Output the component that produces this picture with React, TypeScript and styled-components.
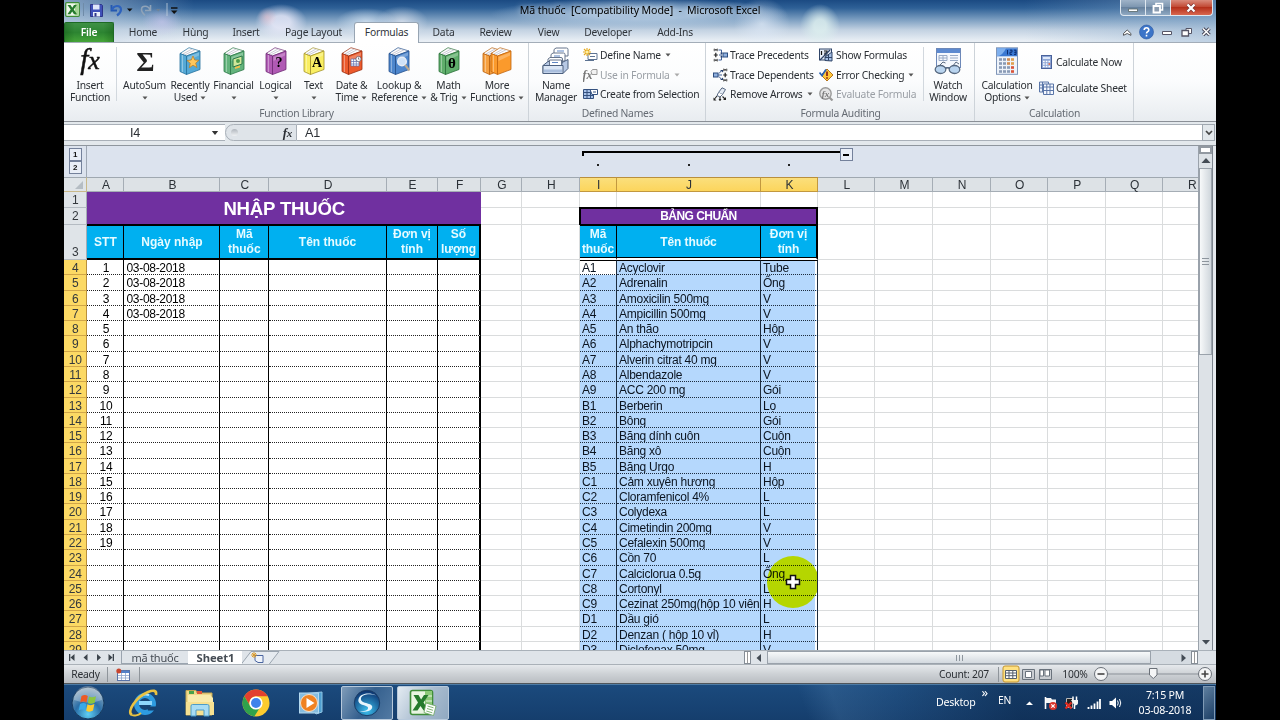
import { Fragment, ReactNode } from 'react';
import styled, { createGlobalStyle, css } from 'styled-components';

const COLUMNS = [
  { name: 'A', width: 37.1 },
  { name: 'B', width: 96 },
  { name: 'C', width: 48.5 },
  { name: 'D', width: 118 },
  { name: 'E', width: 51 },
  { name: 'F', width: 43 },
  { name: 'G', width: 41.5 },
  { name: 'H', width: 57.5 },
  { name: 'I', width: 37 },
  { name: 'J', width: 144 },
  { name: 'K', width: 57 },
  { name: 'L', width: 57.5 },
  { name: 'M', width: 57.6 },
  { name: 'N', width: 57.6 },
  { name: 'O', width: 57.6 },
  { name: 'P', width: 57.6 },
  { name: 'Q', width: 57.6 },
  { name: 'R', width: 57.6 },
];

const MEDICINES = [
  ['A1', 'Acyclovir', 'Tube'],
  ['A2', 'Adrenalin', 'Ống'],
  ['A3', 'Amoxicilin 500mg', 'V'],
  ['A4', 'Ampicillin 500mg', 'V'],
  ['A5', 'An thão', 'Hộp'],
  ['A6', 'Alphachymotripcin', 'V'],
  ['A7', 'Alverin citrat 40 mg', 'V'],
  ['A8', 'Albendazole', 'V'],
  ['A9', 'ACC 200 mg', 'Gói'],
  ['B1', 'Berberin', 'Lọ'],
  ['B2', 'Bông', 'Gói'],
  ['B3', 'Băng dính cuôn', 'Cuộn'],
  ['B4', 'Băng xô', 'Cuộn'],
  ['B5', 'Băng Urgo', 'H'],
  ['C1', 'Cảm xuyên hương', 'Hộp'],
  ['C2', 'Cloramfenicol 4%', 'L'],
  ['C3', 'Colydexa', 'L'],
  ['C4', 'Cimetindin 200mg', 'V'],
  ['C5', 'Cefalexin 500mg', 'V'],
  ['C6', 'Cồn 70', 'L'],
  ['C7', 'Calciclorua 0.5g', 'Ống'],
  ['C8', 'Cortonyl', 'L'],
  ['C9', 'Cezinat 250mg(hộp 10 viên', 'H'],
  ['D1', 'Dầu gió', 'L'],
  ['D2', 'Denzan ( hộp 10 vỉ)', 'H'],
  ['D3', 'Diclofenax 50mg', 'V'],
];

const TABS = [
  { name: 'Home', width: 58 },
  { name: 'Hùng', width: 47 },
  { name: 'Insert', width: 54 },
  { name: 'Page Layout', width: 81 },
  { name: 'Formulas', width: 65, active: true },
  { name: 'Data', width: 49 },
  { name: 'Review', width: 55 },
  { name: 'View', width: 51 },
  { name: 'Developer', width: 68 },
  { name: 'Add-Ins', width: 66 },
];

/* icons */

const Caret = ({ color = '#555' }: { color?: string }) => (
  <svg width='6' height='4' viewBox='0 0 6 4'>
    <path d='M0.5 0.5h5L3 3.5z' fill={color} />
  </svg>
);

interface BookProps {
  color: string;
  dark: string;
  children?: ReactNode;
}

const BookShape = ({ color, dark }: BookProps) => (
  <>
    <path d='M1 6.5L10 .7l11 3.3L7.5 9z' fill='#fdfdfd' stroke={dark} strokeWidth='.7' />
    <path d='M4 7l9-5M6 7.8l10-5' stroke='#aab' strokeWidth='.6' />
    <path d='M1 6.5L7.5 9v18.5L1 24.5z' fill={color} stroke={dark} strokeWidth='.8' />
    <path d='M3.4 8v17' stroke='#fff' strokeOpacity='.4' strokeWidth='1' />
    <path d='M7.5 9L21 4v18.5L7.5 27.5z' fill={color} stroke={dark} strokeWidth='.8' />
    <path d='M8.5 10L20 5.6v3L8.5 14z' fill='#fff' fillOpacity='.25' />
  </>
);

const Book = ({ color, dark, children }: BookProps) => (
  <svg width='22' height='28' viewBox='0 0 22 28'>
    <BookShape color={color} dark={dark} />
    {children}
  </svg>
);

const Glyph = styled.text`
  font-family: 'Liberation Serif', serif;
  font-weight: bold;
  font-size: 14px;
  letter-spacing: 0;
  text-anchor: middle;
`;

const MoreBooks = () => (
  <svg width='30' height='28' viewBox='0 0 30 28'>
    <BookShape color='#f6a040' dark='#b9600c' />
    <g transform='translate(8 0)'>
      <BookShape color='#fb9a2c' dark='#c0650f' />
    </g>
  </svg>
);

const NameManagerIcon = () => (
  <svg width='28' height='28' viewBox='0 0 28 28'>
    <g fill='#fff' stroke='#66758c' strokeWidth='1'>
      <path d='M12 2.5l2-1.5h10.5q1.5 0 1.5 1.5V9H12z' />
      <path d='M9 7.5L11 6h10.5q1.5 0 1.5 1.5V14H9z' />
      <path d='M6 12l2-1.5h11q1.5 0 1.5 1.5V18H6z' />
    </g>
    <path d='M15 4h7M12 9h6M9 13.5h6' stroke='#5f86c4' strokeWidth='1.2' />
    <path d='M1 18.5l5-4h2v3h12v-2l6-3v9l-5 5H1z' fill='#b8c9e4' stroke='#4c607f' />
    <path d='M7.5 13h12v5.5h-12z' fill='#fff' stroke='#66758c' />
    <path d='M10 15.5h6' stroke='#5f86c4' />
    <path d='M1 18.5h20v8H1z' fill='#dbe6f5' stroke='#4c607f' />
    <path d='M2 24h18' stroke='#a9bedd' strokeWidth='3' />
  </svg>
);

const WatchIcon = () => (
  <svg width='28' height='28' viewBox='0 0 28 28'>
    <rect x='2.5' y='1.5' width='24' height='19' fill='#f5f8fd' stroke='#6d88b8' />
    <rect x='3' y='2' width='23' height='4' fill='#5d8ad0' />
    <path d='M5 8.5h8v5H5zM5 11h8M16 8.5h8M16 11h8M16 13.5h8M9 8.5v5' stroke='#98aac6' fill='none' />
    <path d='M4 20l5-5 2.5 1M18 20l4-5 3 2' fill='none' stroke='#5b6b80' />
    <ellipse cx='6.5' cy='22.5' rx='5.3' ry='4' fill='#b9d4ef' stroke='#56687f' strokeWidth='1.3' />
    <ellipse cx='20.5' cy='22.5' rx='5.3' ry='4' fill='#b9d4ef' stroke='#56687f' strokeWidth='1.3' />
    <path d='M11.5 21.5q2-1.5 4 0' fill='none' stroke='#56687f' strokeWidth='1.3' />
  </svg>
);

const CalcIcon = () => (
  <svg width='24' height='28' viewBox='0 0 24 28'>
    <rect x='1.5' y='.8' width='21' height='26.5' fill='#eef3fa' stroke='#7f95b8' />
    <rect x='2' y='1.3' width='20' height='8' fill='#3a78d2' />
    <path d='M2 9.3q6-1 9-8H2z' fill='#7fb0ee' />
    <path d='M12.5 3v4.5M15 3.2h2v2h-2v2.2h2M19 3.2h2v4.2h-2M19.2 5.3h2' stroke='#0c2d70' fill='none' />
    {[12, 16, 20, 24].map((y) =>
      [4, 8, 12, 16].map((x) => (
        <rect
          key={`${x}-${y}`}
          x={x}
          y={y - 0.8}
          width='3'
          height='2.6'
          fill={x === 16 && y > 18 ? '#d9543a' : x === 16 ? '#e0a050' : y < 18 && x === 12 ? '#d08d55' : '#8a9bb6'}
        />
      ))
    )}
  </svg>
);

const SmallIcon = ({ name }: { name: string }) => (
  <svg width='15' height='14' viewBox='0 0 15 14'>
    {name === 'define' && (
      <>
        <path d='M5 5.5h9v6H5z' fill='#fff' stroke='#5d7392' />
        <path d='M7 8.5h5M2 12.5h9' stroke='#5d7392' />
        <path d='M4 0v8M0 4h8M1 1l6 6M7 1L1 7' stroke='#e6a91c' strokeWidth='1.1' />
        <circle cx='4' cy='4' r='1.5' fill='#fff0a0' />
      </>
    )}
    {name === 'use' && (
      <>
        <Glyph x='4.5' y='11' fill='#777' fontStyle='italic' style={{ fontSize: 12 }}>
          fx
        </Glyph>
        <path d='M8 3.5l1.5-2h4.5v5H9z' fill='#f2f2f2' stroke='#999' />
      </>
    )}
    {name === 'create' && (
      <>
        <path d='M.5 2.5h10v9H.5z' fill='#a9c3ea' stroke='#34517f' />
        <path d='M.5 5.5h10M.5 8.5h10M4 2v9.5M7.5 2v9.5' stroke='#34517f' />
        <path d='M7 2.5h7.5v5H9z' fill='#fff' stroke='#34517f' />
        <path d='M10 5h3' stroke='#34517f' />
      </>
    )}
    {name === 'precedents' && (
      <>
        <path d='M.8 1.8h4M.8 12.2h4M.8 7h4M2.8 4.8v4.4' stroke='#222' strokeWidth='1.2' />
        <path d='M1.3 .5v2.8M4.3 .5v2.8M1.3 10.8v2.8M4.3 10.8v2.8' stroke='#777' />
        <path d='M5.5 2h3v3.5M5.5 12h3V8.5M6 7h3' fill='none' stroke='#3f5f96' />
        <path d='M7 4.8h3L8.5 6.5zM7 9.2h3L8.5 7.5z' fill='#26406f' />
        <rect x='10' y='5' width='4.5' height='4' fill='#8fb0de' stroke='#2d4d80' />
      </>
    )}
    {name === 'dependents' && (
      <>
        <path d='M10.2 1.8h4M10.2 12.2h4M10.2 7h4M12.2 4.8v4.4' stroke='#222' strokeWidth='1.2' />
        <path d='M10.7 .5v2.8M13.7 .5v2.8M10.7 10.8v2.8M13.7 10.8v2.8' stroke='#777' />
        <path d='M6 5.5l3-3.5M6 8.5L9 12M5 7h4' fill='none' stroke='#3f5f96' />
        <path d='M7 2h3v2.5zM7 12h3V9.5z' fill='#26406f' />
        <rect x='.5' y='5' width='4.5' height='4' fill='#8fb0de' stroke='#2d4d80' />
      </>
    )}
    {name === 'remove' && (
      <>
        <path d='M5.5 5.5L9 .8l3.5 1.7-3 5z' fill='#e4ebf5' stroke='#566781' />
        <path d='M5.5 5.5l-1.5 3 3 1.5 2.5-2.5' fill='#fff' stroke='#566781' />
        <path d='M4 9l-2.5 3M7 10v3.5M9.5 9.5l2.5 2.5' stroke='#222' strokeWidth='1.1' />
        <path d='M.5 10.5v3h3zM5.5 12h3l-1.5 2zM13 10v3h-3z' fill='#222' />
      </>
    )}
    {name === 'show' && (
      <>
        <rect x='.5' y='1' width='12' height='11' fill='#e8eef8' stroke='#2f4468' />
        <path d='M2.5 3v4M5 3h3v2H6v2h2.5' stroke='#111' strokeWidth='1.2' fill='none' />
        <path d='M1 12L11 2' stroke='#2f4468' strokeWidth='1.3' />
        <path d='M6 12.5V9l7-5v9z' fill='#a5bfe5' stroke='#2f4468' />
        <path d='M9.5 6.5v6M6 9.5h7' stroke='#2f4468' />
      </>
    )}
    {name === 'error' && (
      <>
        <path d='M8 1l6 6-6 6-6-6z' fill='#ffc73a' stroke='#b5741a' />
        <path d='M8 3.5v4.5M8 9.2v1.6' stroke='#8a1f10' strokeWidth='1.7' />
        <path d='M.5 4.5L3 7.5 7 1.5' fill='none' stroke='#2b62b4' strokeWidth='1.7' />
      </>
    )}
    {name === 'evaluate' && (
      <>
        <circle cx='6.5' cy='6.5' r='5.7' fill='#e4e4e4' stroke='#999' strokeWidth='1.4' />
        <path d='M10.5 10.5l3 3' stroke='#999' strokeWidth='2.2' />
        <Glyph x='6.5' y='9.5' fill='#777' fontStyle='italic' style={{ fontSize: 9 }}>
          fx
        </Glyph>
      </>
    )}
    {name === 'calcNow' && (
      <>
        <rect x='2.5' y='.5' width='10' height='13' fill='#8ea6d6' stroke='#4a629b' />
        <rect x='4' y='2' width='7' height='2' fill='#dfe9fa' />
        <path d='M4 6.5h7M4 9h7M4 11.5h7' stroke='#fff' strokeWidth='1.6' strokeDasharray='1.7 1' />
        <path d='M9.5 9h1.7' stroke='#d2543a' strokeWidth='1.6' />
      </>
    )}
    {name === 'calcSheet' && (
      <>
        <path d='M.5 1h9v10h-9z' fill='#e9effa' stroke='#5a76a8' />
        <path d='M.5 4h9M.5 7h9M3.5 1v10' stroke='#5a76a8' />
        <path d='M4.5 3h10v10.5h-10z' fill='#f6f9ff' stroke='#5a76a8' />
        <path d='M4.5 6h10M4.5 9.5h10M7.8 3v10.5M11 3v10.5' stroke='#5a76a8' />
      </>
    )}
  </svg>
);

const ExcelLogo = ({ size }: { size: number }) => (
  <svg width={size} height={size} viewBox='0 0 28 28'>
    <rect x='1.5' y='1.5' width='22' height='24' rx='2' fill='#e9f5e2' stroke='#3f8d3a' strokeWidth='1.6' />
    <path d='M16 2h7v23h-7z' fill='#8cc978' />
    <path d='M17 7h6M17 12h6' stroke='#e9f5e2' />
    <path d='M4.5 6h5l2.6 4.6L15 6h4.5l-5 7.5 5.2 8h-5L11.5 17l-3 4.5h-5l5.5-8z' fill='#257a2d' />
    <path d='M17 14l10 3-2.5 9.5-9.5-3z' fill='#fff' stroke='#6aa45e' strokeWidth='.8' />
    <path d='M18.5 17l6 1.8M18 19.5l6 1.8M17.3 22l6 1.8' stroke='#7fb474' />
  </svg>
);

const SmallExcelLogo = () => (
  <svg width='15' height='15' viewBox='0 0 15 15'>
    <rect x='.7' y='.7' width='13.6' height='13.6' rx='1' fill='#eef7ea' stroke='#3f8d3a' strokeWidth='1.3' />
    <path d='M10 1.5h3.5v12H10z' fill='#a5d494' />
    <path d='M2.5 3h3l1.8 2.8L9 3h2.8L8.7 7.5l3.3 4.7H9L7.2 9.4l-1.9 2.8H2.4l3.3-4.7z' fill='#257a2d' />
  </svg>
);

const QuickIcons = () => (
  <svg width='100' height='16' viewBox='16 0 100 16'>
    <path d='M19.5 2v13' stroke='#6f8ba8' />
    <g transform='translate(26 3)'>
      <path d='M.5 .5h11l1 1v11H.5z' fill='#3f50b8' stroke='#2d368a' />
      <path d='M3 .5h6.5v5H3z' fill='#dfe6fa' />
      <path d='M3 8h7v4.5H3z' fill='#e9eef9' />
      <path d='M4.5 9h2v3.5h-2z' fill='#2d368a' />
    </g>
    <path d='M47.5 4v5.5h5.5' fill='none' stroke='#2458b0' strokeWidth='1.9' />
    <path d='M48 9c1.5-5 9-5.5 9-.5 0 3-2 4.5-4 6' fill='none' stroke='#2d62bd' strokeWidth='2.2' />
    <path d='M63 7.5h5.5L65.7 10.5z' fill='#111' />
    <path d='M86.5 4v5.5H81M86 9c-1.5-5-8.5-5-8.5-.5 0 2.5 1.5 4 3.5 6' fill='none' stroke='#8fa3b8' strokeWidth='1.6' />
    <path d='M92 8h4.5L94.2 10.5z' fill='#6f8296' />
    <path d='M103 2v13' stroke='#c3d0dd' strokeWidth='.8' />
    <path d='M107 7h6.5' stroke='#111' strokeWidth='1.5' />
    <path d='M107 9.5h6.5L110.2 13z' fill='#111' />
  </svg>
);

/* components */

interface BigProps {
  width: number;
  icon: ReactNode;
  first: string;
  second?: string;
  arrow?: boolean;
}

const Big = ({ width, icon, first, second, arrow }: BigProps) => (
  <BigButton $width={width}>
    <BigIcon>{icon}</BigIcon>
    <span>{first}</span>
    <BigLine>
      {second}
      {arrow && <Caret />}
    </BigLine>
  </BigButton>
);

interface SmallProps {
  icon: string;
  text: string;
  arrow?: boolean;
  disabled?: boolean;
}

const Small = ({ icon, text, arrow, disabled }: SmallProps) => (
  <SmallButton $disabled={disabled}>
    <SmallIcon name={icon} />
    <span>{text}</span>
    {arrow && <Caret color={disabled ? '#aaa' : '#555'} />}
  </SmallButton>
);

const Ribbon = () => (
  <RibbonBar>
    <Group $width={465}>
      <GroupBody>
        <Big
          width={52}
          icon={
            <FxBig>
              f<small>x</small>
            </FxBig>
          }
          first='Insert'
          second='Function'
        />
        <Divider $gap={3} />
        <Big width={49} icon={<Sigma>Σ</Sigma>} first='AutoSum' arrow />
        <Big
          width={42}
          first='Recently'
          second='Used'
          arrow
          icon={
            <Book color='#55a9d6' dark='#24709c'>
              <path d='M14 9l1.7 4 4.3.3-3.3 2.8 1.2 4.4-3.9-2.3-3.7 2.5 1-4.4L8 13.5l4.2-.5z' fill='#ffc75c' stroke='#c07a18' strokeWidth='.7' />
            </Book>
          }
        />
        <Big
          width={45}
          first='Financial'
          arrow
          icon={
            <Book color='#63b37c' dark='#2c7848'>
              <path d='M10 12l9-3v8l-9 3z' fill='#cfe79a' stroke='#2c7848' />
              <circle cx='15' cy='14' r='2' fill='#4c9a48' />
              <path d='M12 20l5-1.5v2L12 22z' fill='#f2c04a' />
            </Book>
          }
        />
        <Big
          width={39}
          first='Logical'
          arrow
          icon={
            <Book color='#b05ab4' dark='#6f2975'>
              <Glyph x='14' y='20'>?</Glyph>
            </Book>
          }
        />
        <Big
          width={37}
          first='Text'
          arrow
          icon={
            <Book color='#f9ee62' dark='#a3932a'>
              <Glyph x='14' y='20'>A</Glyph>
            </Book>
          }
        />
        <Big
          width={39}
          first='Date &'
          second='Time'
          arrow
          icon={
            <Book color='#ec5a2c' dark='#9c2e10'>
              <path d='M10 12h8v7h-8zM10 14.5h8M10 17h8M12.6 12v7M15.3 12v7' fill='#fff' stroke='#5c6fb0' strokeWidth='.7' />
              <circle cx='17.5' cy='12' r='2.6' fill='#fff' stroke='#667' strokeWidth='.8' />
              <path d='M17.5 10.5v1.7h1' fill='none' stroke='#445' strokeWidth='.7' />
            </Book>
          }
        />
        <Big
          width={56}
          first='Lookup &'
          second='Reference'
          arrow
          icon={
            <Book color='#4d86cc' dark='#234f8c'>
              <circle cx='14' cy='14.5' r='4.3' fill='#cfe2f7' stroke='#e8edf5' strokeWidth='1.5' />
              <path d='M17 18l4.5 5.5' stroke='#b9a990' strokeWidth='2' />
            </Book>
          }
        />
        <Big
          width={43}
          first='Math'
          second='& Trig'
          arrow
          icon={
            <Book color='#5fae6b' dark='#2a7038'>
              <Glyph x='14' y='21' style={{ fontSize: 15 }}>θ</Glyph>
            </Book>
          }
        />
        <Big width={54} first='More' second='Functions' arrow icon={<MoreBooks />} />
      </GroupBody>
      <GroupName>Function Library</GroupName>
    </Group>
    <Group $width={177}>
      <GroupBody>
        <Big width={54} icon={<NameManagerIcon />} first='Name' second='Manager' />
        <SmallColumn>
          <Small icon='define' text='Define Name' arrow />
          <Small icon='use' text='Use in Formula' arrow disabled />
          <Small icon='create' text='Create from Selection' />
        </SmallColumn>
      </GroupBody>
      <GroupName>Defined Names</GroupName>
    </Group>
    <Group $width={269}>
      <GroupBody>
        <SmallColumn $left={7} $width={106}>
          <Small icon='precedents' text='Trace Precedents' />
          <Small icon='dependents' text='Trace Dependents' />
          <Small icon='remove' text='Remove Arrows' arrow />
        </SmallColumn>
        <SmallColumn $width={104}>
          <Small icon='show' text='Show Formulas' />
          <Small icon='error' text='Error Checking' arrow />
          <Small icon='evaluate' text='Evaluate Formula' disabled />
        </SmallColumn>
        <Divider />
        <Big width={48} icon={<WatchIcon />} first='Watch' second='Window' />
      </GroupBody>
      <GroupName>Formula Auditing</GroupName>
    </Group>
    <Group $width={159}>
      <GroupBody>
        <Big width={64} icon={<CalcIcon />} first='Calculation' second='Options' arrow />
        <SmallColumn $spread>
          <Small icon='calcNow' text='Calculate Now' />
          <Small icon='calcSheet' text='Calculate Sheet' />
        </SmallColumn>
      </GroupBody>
      <GroupName>Calculation</GroupName>
    </Group>
  </RibbonBar>
);

const SheetRows = () => (
  <>
    {MEDICINES.map(([code, name, unit], i) => (
      <Fragment key={code}>
        <RowHeader $selected>{i + 4}</RowHeader>
        <EntryCell $center>{i < 19 ? i + 1 : ''}</EntryCell>
        <EntryCell>{i < 4 ? '03-08-2018' : ''}</EntryCell>
        <EntryCell />
        <EntryCell />
        <EntryCell />
        <EntryCell $last />
        <Cell />
        <Cell />
        <DrugCell $first={i === 0} $active={i === 0}>{code}</DrugCell>
        <DrugCell $first={i === 0}>{name}</DrugCell>
        <DrugCell $first={i === 0} $last>{unit}</DrugCell>
        {COLUMNS.slice(11).map((c) => (
          <Cell key={c.name} />
        ))}
      </Fragment>
    ))}
  </>
);

const BlankCells = ({ from, to }: { from: number; to: number }) => (
  <>
    {COLUMNS.slice(from, to).map((c) => (
      <Cell key={c.name} />
    ))}
  </>
);

const Sheet = () => (
  <SheetArea>
    <OutlineGrid>
      <OutlineLevels>
        <OutlineButton>1</OutlineButton>
        <OutlineButton>2</OutlineButton>
      </OutlineLevels>
      <OutlineBar>
        <Bracket />
        <OutlineButton $minus />
      </OutlineBar>
      <OutlineDot $column={10} />
      <OutlineDot $column={11} />
      <OutlineDot $column={12} />
    </OutlineGrid>
    <Cells>
      <Corner>
        <svg width='8' height='8' viewBox='0 0 8 8'>
          <path d='M8 0v8H0z' fill='#b5bdc4' />
        </svg>
      </Corner>
      {COLUMNS.map((c) => (
        <ColumnHeader key={c.name} $selected={'IJK'.includes(c.name)}>
          {c.name}
        </ColumnHeader>
      ))}
      <RowHeader>1</RowHeader>
      <TitleCell>NHẬP THUỐC</TitleCell>
      <BlankCells from={6} to={18} />
      <RowHeader>2</RowHeader>
      <BlankCells from={6} to={8} />
      <StandardTitle>BẢNG CHUẨN</StandardTitle>
      <BlankCells from={11} to={18} />
      <RowHeader $bottom>3</RowHeader>
      <HeadCell>STT</HeadCell>
      <HeadCell>Ngày nhập</HeadCell>
      <HeadCell>Mã thuốc</HeadCell>
      <HeadCell>Tên thuốc</HeadCell>
      <HeadCell>Đơn vị tính</HeadCell>
      <HeadCell $last>Số lượng</HeadCell>
      <BlankCells from={6} to={8} />
      <HeadCell $standard>Mã thuốc</HeadCell>
      <HeadCell $standard>Tên thuốc</HeadCell>
      <HeadCell $standard $last>Đơn vị tính</HeadCell>
      <BlankCells from={11} to={18} />
      <SheetRows />
    </Cells>
  </SheetArea>
);

const VerticalScroll = () => (
  <VScroll>
    <SplitBox />
    <svg width='14' height='14' viewBox='0 0 14 14'>
      <path d='M2.5 9h9L7 4z' fill='#444c55' />
    </svg>
    <VThumb>
      <i />
      <i />
      <i />
    </VThumb>
    <Grow />
    <svg width='14' height='16' viewBox='0 0 14 16'>
      <path d='M3 6h8l-4 4.5z' fill='#444c55' />
    </svg>
  </VScroll>
);

const SheetTabs = () => (
  <TabStrip>
    <svg width='57' height='14' viewBox='0 0 57 14'>
      <g fill='#3c444c'>
        <path d='M5 3h1.3v7H5zM10.5 3v7L6.5 6.5zM23.5 3v7l-4-3.5zM33 3v7l4-3.5zM44.5 3v7l4-3.5zM48.7 3H50v7h-1.3z' />
      </g>
    </svg>
    <SheetTab>mã thuốc</SheetTab>
    <SheetTab $active>Sheet1</SheetTab>
    <svg width='42' height='14' viewBox='0 0 42 14'>
      <path d='M-1 13.5L9 .5h28L27 13.5' fill='#e6ebf0' stroke='#9aa4af' />
      <path d='M13 4.5h8v7h-5l-3-2z' fill='#eef3fa' stroke='#4a65a0' />
      <path d='M12 1v6M9 4h6M10 2l4 4M14 2l-4 4' stroke='#dc9c2c' />
    </svg>
    <Grow />
    <SplitHandle />
    <svg width='16' height='14' viewBox='0 0 16 14'>
      <path d='M10 3v8L5.5 7z' fill='#444c55' />
    </svg>
    <HThumb>
      <i />
      <i />
      <i />
    </HThumb>
    <HTrack>
      <svg width='11' height='14' viewBox='0 0 11 14'>
        <path d='M1.5 3v8L6 7z' fill='#444c55' />
      </svg>
    </HTrack>
    <SplitHandle />
    <StripEnd />
  </TabStrip>
);

const StatusBar = () => (
  <Status>
    <StatusText $width={43}>Ready</StatusText>
    <StatusLine />
    <MacroIcon width='14' height='13' viewBox='0 0 14 13'>
      <rect x='1.5' y='2.5' width='12' height='10' fill='#fff' stroke='#5873a8' />
      <path d='M2 4h11' stroke='#5380c8' strokeWidth='2' />
      <path d='M2 7.5h11M2 10h11M5.5 5v7M9.5 5v7' stroke='#8ba3cc' strokeWidth='.8' />
      <circle cx='2.8' cy='3' r='2.5' fill='#c8452e' />
    </MacroIcon>
    <StatusLine />
    <Grow />
    <StatusText $width={68}>Count: 207</StatusText>
    <StatusLine />
    <ViewIcons width='54' height='18' viewBox='0 0 54 18'>
      <rect x='1' y='1' width='16' height='16' rx='2' fill='#ffe182' stroke='#c4952e' />
      <path d='M3.5 5.5h11v8h-11zM3.5 8h11M3.5 10.7h11M7 5.5v8M10.8 5.5v8' fill='#fff' stroke='#555f6b' />
      <path d='M20.5 4.5h12v10h-12z' fill='#c9cdd2' stroke='#6a737d' />
      <path d='M23.5 6.5h6v6h-6z' fill='#fff' stroke='#6a737d' />
      <path d='M37.5 4.5h12v10h-12z' fill='#c9cdd2' stroke='#6a737d' />
      <path d='M38 5h3.5v6H38zM43 5h4.5v6H43z' fill='#fff' stroke='#6a737d' />
    </ViewIcons>
    <StatusText $width={34}>100%</StatusText>
    <svg width='124' height='18' viewBox='0 0 124 18'>
      <path d='M16 9h91' stroke='#8b9198' />
      <circle cx='9' cy='9' r='6.5' fill='#f4f5f6' stroke='#6a7078' />
      <path d='M5.5 9h7' stroke='#444' strokeWidth='1.6' />
      <circle cx='113' cy='9' r='6.5' fill='#f4f5f6' stroke='#6a7078' />
      <path d='M109.5 9h7M113 5.5v7' stroke='#444' strokeWidth='1.6' />
      <path d='M57.5 3.5h7.5v6.5l-3.7 3.5-3.8-3.5z' fill='#f4f5f6' stroke='#6a7078' />
    </svg>
  </Status>
);

const Taskbar = () => (
  <Task>
    <TaskItem $width={48}>
      <svg width='34' height='34' viewBox='0 0 34 34'>
        <defs>
          <radialGradient id='orb' cx='.5' cy='.85' r='.8'>
            <stop offset='0' stopColor='#5fd0f5' />
            <stop offset='.5' stopColor='#2b6fa8' />
            <stop offset='1' stopColor='#8fa9bd' />
          </radialGradient>
        </defs>
        <circle cx='17' cy='17' r='16' fill='url(#orb)' stroke='#173a5e' />
        <path d='M3 14a14 14 0 0 1 28 0q-14 5-28 0z' fill='#fff' fillOpacity='.28' />
        <path d='M10.5 10q3.5-2 6.3 0l-1.3 6.5q-3-1.8-6.3 0z' fill='#ee5a24' />
        <path d='M18 10.5q3 1.8 7-.3l-1.3 6.5q-3.7 2-6.8.2z' fill='#8cc63e' />
        <path d='M9 18q3.5-2 6.2 0L14 24.5q-3-1.8-6.3 0z' fill='#39a9e8' />
        <path d='M16.5 18.3q3 1.8 6.9-.2L22 24.6q-3.5 2-6.8.2z' fill='#ffcb2e' />
      </svg>
    </TaskItem>
    <TaskItem $width={64}>
      <svg width='32' height='30' viewBox='0 0 32 30'>
        <circle cx='17' cy='16' r='8.5' fill='none' stroke='#2e9be0' strokeWidth='5' />
        <path d='M11 13h13v4H11z' fill='#8fd5fa' />
        <path d='M19 18.5h9v4h-8z' fill='#15406f' />
        <path d='M10 11q4-6 11-4' fill='none' stroke='#aee2fc' strokeWidth='2' />
        <path d='M4 27C-2 24 8 9 20 4c5-2 9-2 8 3' fill='none' stroke='#e9c242' strokeWidth='2.6' />
        <path d='M4 27c2 1.2 6 .5 9-2' fill='none' stroke='#e9c242' strokeWidth='2' />
      </svg>
    </TaskItem>
    <TaskItem $width={47}>
      <svg width='32' height='30' viewBox='0 0 32 30'>
        <path d='M2 5V2.5h10L13 5h15v22H2z' fill='#efd98a' stroke='#c3a651' />
        <path d='M5 3h5v3H5z' fill='#46a24c' />
        <path d='M13 3h5v3h-5z' fill='#e2553a' />
        <path d='M4 7h22l3 3v17H4z' fill='#f9ebac' />
        <path d='M2 14h28v13H2z' fill='#f6e192' />
        <path d='M7 28V18q0-1.5 1.5-1.5h15q1.5 0 1.5 1.5v10h-5v-6h-8v6z' fill='#a7dcf4' stroke='#4c9cc8' />
      </svg>
    </TaskItem>
    <TaskItem $width={65}>
      <svg width='28' height='28' viewBox='0 0 28 28'>
        <circle cx='14' cy='14' r='13.5' fill='#fccb2f' />
        <path d='M2.3 7.3a13.5 13.5 0 0 1 23.4 0H14a6.7 6.7 0 0 0-6.3 9z' fill='#e2402f' />
        <path d='M2.3 7.3a13.5 13.5 0 0 0 10 20.1l6-9.5A6.5 6.5 0 0 1 8 16.8z' fill='#2fa24c' />
        <circle cx='14' cy='14' r='6.6' fill='#fff' />
        <circle cx='14' cy='14' r='5' fill='#3f82ea' />
      </svg>
    </TaskItem>
    <TaskItem $width={45}>
      <svg width='26' height='26' viewBox='0 0 26 26'>
        <path d='M4 4l20-2v20l-6 2z' fill='#4f9fd0' stroke='#8fc6e6' />
        <rect x='1.5' y='3' width='19' height='20' fill='#86bde0' stroke='#b5daf0' />
        <circle cx='11' cy='13' r='8.5' fill='#f08222' stroke='#f8e1c8' />
        <path d='M8.5 8v10l8-5z' fill='#fff' />
      </svg>
    </TaskItem>
    <Grow $fixed={8} />
    <TaskItem $width={52} $open>
      <svg width='28' height='28' viewBox='0 0 28 28'>
        <defs>
          <radialGradient id='ball' cx='.5' cy='.8' r='.8'>
            <stop offset='0' stopColor='#3cc0ee' />
            <stop offset='1' stopColor='#0a2e6c' />
          </radialGradient>
        </defs>
        <circle cx='14' cy='14' r='12.7' fill='url(#ball)' stroke='#1b3d66' />
        <path
          d='M23 6.5C17 4 9 5.5 8 9c-.8 3.5 3 4.5 6.5 5.5 4 1 6 2.5 4 5.5-2 2.6-8 3.5-12 2 5 .3 8-.5 8.5-2.5.5-2-2-2.5-5-3.5C5.5 14.5 4.5 12 6 9c2-4.5 10.5-6 17-2.5z'
          fill='#e8f6fd'
        />
      </svg>
    </TaskItem>
    <TaskItem $width={52} $open $focused>
      <ExcelLogo size={28} />
    </TaskItem>
    <Grow />
    <Desktop>Desktop</Desktop>
    <Chevrons>»</Chevrons>
    <Language>EN</Language>
    <svg width='102' height='16' viewBox='0 0 102 16'>
      <path d='M1 10h7L4.5 6.5z' fill='#fff' />
      <path d='M20.5 2v12' stroke='#fff' strokeWidth='1.6' />
      <path d='M21 3h5l1 1.5h4v5h-5L25 8h-4z' fill='#f4f4f4' />
      <circle cx='28' cy='11' r='4' fill='#d9352b' />
      <path d='M26.3 9.3l3.4 3.4M29.7 9.3l-3.4 3.4' stroke='#fff' strokeWidth='1.2' />
      <path d='M41.5 3.5h6v9h-6z' fill='#222' stroke='#b9b9b9' />
      <path d='M46 5h7v3q0 2-3.5 2.5z' fill='#f4f4f4' />
      <path d='M49.5 10v4M48 1.5V5M51.5 1.5V5' fill='none' stroke='#fff' strokeWidth='1.5' />
      <path d='M40.5 7.5l6 6M46.5 7.5l-6 6' stroke='#e02a20' strokeWidth='2.2' />
      <path d='M63.5 14v-2M66.5 14v-3.5M69.5 14V8.5M72.5 14V6.5M75 14V4' stroke='#fff' strokeWidth='1.8' />
      <path d='M84.5 6h2.5l4-3.5v11L87 10h-2.5z' fill='#fff' />
      <path d='M92.5 5.5q1.5 2.5 0 5M94.5 4q2.5 4 0 8' fill='none' stroke='#fff' />
    </svg>
    <Clock>
      <span>7:15 PM</span>
      <span>03-08-2018</span>
    </Clock>
    <ShowDesktop />
  </Task>
);

function App() {
  return (
    <>
      <GlobalStyle />
      <Page>
        <Screen>
          <WindowTop>
            <TitleBar>
              <QuickAccess>
                <SmallExcelLogo />
                <QuickIcons />
              </QuickAccess>
              <WindowTitle>
                {'Mã thuốc  [Compatibility Mode]  -  Microsoft Excel'}
              </WindowTitle>
              <WindowButtons>
                <WindowButton $width={26}>
                  <svg width='12' height='12' viewBox='0 0 12 12'>
                    <path d='M1.5 7h9v2.5h-9z' fill='#fff' stroke='#566' strokeWidth='.8' />
                  </svg>
                </WindowButton>
                <WindowButton $width={25}>
                  <svg width='12' height='12' viewBox='0 0 12 12'>
                    <path d='M4 1.5h6.5V8H4z' fill='none' stroke='#fff' strokeWidth='1.6' />
                    <path d='M1.5 4H8v6.5H1.5z' fill='#8c9db0' stroke='#fff' strokeWidth='1.8' />
                  </svg>
                </WindowButton>
                <WindowButton $width={42} $close>
                  <svg width='12' height='12' viewBox='0 0 12 12'>
                    <path d='M2.5 2.5l7 7M9.5 2.5l-7 7' stroke='#733' strokeWidth='3.6' />
                    <path d='M2.5 2.5l7 7M9.5 2.5l-7 7' stroke='#fff' strokeWidth='2.3' />
                  </svg>
                </WindowButton>
              </WindowButtons>
            </TitleBar>
            <Tabs>
              <FileTab>File</FileTab>
              {TABS.map((tab) => (
                <Tab key={tab.name} $width={tab.width} $active={tab.active}>
                  {tab.name}
                </Tab>
              ))}
              <Grow />
              <svg width='96' height='18' viewBox='0 0 96 18'>
                <path d='M3.5 10.5l3.7-3.5 3.7 3.5v1.8l-3.7-1.8-3.7 1.8z' fill='#fff' stroke='#444' strokeWidth='.9' />
                <circle cx='26.5' cy='9' r='7' fill='#3b74c8' stroke='#2a57a0' strokeWidth='.6' />
                <path d='M24.2 7q0-2.3 2.3-2.3T28.8 7q0 1.2-1.2 1.7-1.1.6-1.1 1.8M26.5 11.7v1.8' fill='none' stroke='#fff' strokeWidth='1.6' />
                <path d='M42.5 8.5h9v3h-9z' fill='#fff' stroke='#556' />
                <path d='M66 5.5h5.5v5H66z' fill='#fff' stroke='#556' />
                <path d='M62 7.5h6.5v5.5H62z' fill='#fff' stroke='#556' strokeWidth='1.3' />
                <path d='M83 5.5l6.5 6.5M89.5 5.5L83 12' stroke='#445' strokeWidth='3.4' />
                <path d='M83 5.5l6.5 6.5M89.5 5.5L83 12' stroke='#fff' strokeWidth='1.5' />
              </svg>
            </Tabs>
          </WindowTop>
          <Ribbon />
          <FormulaBar>
            <NameBox>
              <span>I4</span>
              <svg width='8' height='6' viewBox='0 0 8 6'>
                <path d='M.8 1h6.4L4 5z' fill='#333' />
              </svg>
            </NameBox>
            <FxArea>
              <FxKnob />
              <FxSmall>
                f<small>x</small>
              </FxSmall>
            </FxArea>
            <FormulaInput>A1</FormulaInput>
            <ExpandButton>
              <svg width='10' height='8' viewBox='0 0 10 8'>
                <path d='M2 2l3 3 3-3' fill='none' stroke='#444' strokeWidth='1.7' />
              </svg>
            </ExpandButton>
          </FormulaBar>
          <Workspace>
            <Sheet />
            <VerticalScroll />
            <RightEdge />
          </Workspace>
          <SheetTabs />
          <StatusBar />
          <Taskbar />
        </Screen>
        <Pointer>
          <svg width='16' height='16' viewBox='0 0 16 16'>
            <path d='M5.5 1.5h5v4h4v5h-4v4h-5v-4h-4v-5h4z' fill='#fff' stroke='#111' strokeWidth='1.5' />
          </svg>
        </Pointer>
        <ClickSpot />
      </Page>
    </>
  );
}

export default App;

const GlobalStyle = createGlobalStyle`
  * {
    box-sizing: border-box;
  }

  body {
    margin: 0;
    overflow: hidden;
    background: #000;
  }

  svg {
    flex: none;
    display: block;
  }
`;

const sheetFont = css`
  font-family: 'Liberation Sans', Arial, sans-serif;
  font-size: 12px;
  letter-spacing: -0.25px;
`;

const Page = styled.div`
  position: relative;
  width: 1280px;
  height: 720px;
  display: flex;
  justify-content: center;
  background: #000;
`;

const Screen = styled.div`
  width: 1152px;
  height: 720px;
  display: flex;
  flex-direction: column;
  overflow: hidden;
  font-family: 'Noto Sans', 'Open Sans', sans-serif;
  font-size: 10.3px;
  letter-spacing: -0.23px;
  color: #2b2f34;
  white-space: nowrap;
`;

const Grow = styled.div<{ $fixed?: number }>`
  ${(p) => (p.$fixed ? `width: ${p.$fixed}px;` : 'flex: 1;')}
`;

const WindowTop = styled.div`
  height: 42px;
  flex: none;
  background:
    radial-gradient(ellipse 20px 14px at 98px 22px, rgba(205, 200, 240, 0.6), transparent),
    radial-gradient(ellipse 10px 10px at 203px 17px, rgba(240, 190, 200, 0.5), transparent),
    radial-gradient(ellipse 26px 18px at 217px 22px, rgba(235, 235, 250, 0.8) 35%, transparent),
    radial-gradient(ellipse 30px 14px at 302px 22px, rgba(225, 238, 250, 0.7), transparent),
    radial-gradient(ellipse 26px 16px at 338px 22px, rgba(235, 238, 245, 0.7), transparent),
    radial-gradient(ellipse 150px 16px at 576px 14px, rgba(180, 203, 226, 0.8) 35%, transparent),
    radial-gradient(ellipse 28px 26px at 698px 24px, rgba(225, 235, 248, 0.7), transparent),
    radial-gradient(ellipse 20px 22px at 756px 26px, rgba(220, 238, 238, 0.85) 30%, transparent),
    linear-gradient(90deg, rgba(190, 208, 226, 0.65), transparent 130px),
    linear-gradient(90deg, transparent 960px, rgba(150, 180, 210, 0.5)),
    linear-gradient(#1b4a82 0, #2e6096 8px, #7ea0c2 20px, #c3d2e2 30px, #e9eff5 41px);
`;

const TitleBar = styled.div`
  height: 22px;
  display: flex;
  align-items: flex-start;
  justify-content: space-between;
`;

const QuickAccess = styled.div`
  width: 217px;
  display: flex;
  padding: 2px 0 0 1px;

  svg + svg {
    margin-top: -1px;
  }
`;

const WindowTitle = styled.div`
  padding-top: 2px;
  font-size: 10.6px;
  letter-spacing: -0.1px;
  line-height: 17px;
  color: #000;
  white-space: pre;
  text-shadow: 0 0 6px rgba(255, 255, 255, 0.8);
`;

const WindowButtons = styled.div`
  width: 217px;
  height: 16px;
  display: flex;
  justify-content: flex-end;
  padding-right: 3px;
`;

const WindowButton = styled.div<{ $width: number; $close?: boolean }>`
  width: ${(p) => p.$width}px;
  height: 16px;
  display: flex;
  align-items: center;
  justify-content: center;
  border: 1px solid #dfe8f0;
  border-top: 0;
  border-left: 0;
  background: ${(p) =>
    p.$close
      ? 'linear-gradient(#d98b7c, #c24a35 45%, #b5301b 50%, #d8674f)'
      : 'linear-gradient(#9fb3c8, #7e97b1 45%, #67829f 50%, #8fa9c2)'};

  &:first-child {
    border-left: 1px solid #dfe8f0;
    border-radius: 0 0 0 4px;
  }

  &:last-child {
    border-radius: 0 0 4px 0;
  }
`;

const Tabs = styled.div`
  height: 20px;
  display: flex;
  align-items: center;
`;

const FileTab = styled.div`
  width: 50px;
  height: 20px;
  line-height: 19px;
  text-align: center;
  font-weight: 600;
  color: #fff;
  border: 1px solid #1d6a24;
  border-bottom: 0;
  border-radius: 2px 2px 0 0;
  background: linear-gradient(90deg, rgba(0, 60, 0, 0.25), transparent 20%, transparent 80%, rgba(0, 60, 0, 0.25)),
    linear-gradient(#3f9146, #2c8431 50%, #46a539);
`;

const Tab = styled.div<{ $width: number; $active?: boolean }>`
  width: ${(p) => p.$width}px;
  height: 20px;
  line-height: 20px;
  text-align: center;
  color: #30353b;
  ${(p) =>
    p.$active &&
    css`
      height: 21px;
      margin-top: 1px;
      background: #fff;
      border: 1px solid #98a5b3;
      border-bottom: 0;
      border-radius: 3px 3px 0 0;
      position: relative;
      z-index: 1;
      line-height: 19px;
    `}
`;

const RibbonBar = styled.div`
  height: 80px;
  flex: none;
  display: flex;
  border-top: 1px solid #a3adb8;
  border-bottom: 1px solid #8b9097;
  background: linear-gradient(#fff, #fbfcfd 50%, #e8ecf0);
`;

const Group = styled.div<{ $width: number }>`
  width: ${(p) => p.$width}px;
  display: flex;
  flex-direction: column;
  border-right: 1px solid #cdd3d9;
`;

const GroupBody = styled.div`
  height: 63px;
  display: flex;
`;

const GroupName = styled.div`
  line-height: 14px;
  padding-left: 1px;
  text-align: center;
  color: #656b73;
`;

const Divider = styled.div<{ $gap?: number }>`
  width: 1px;
  height: 54px;
  margin-top: 4px;
  margin-right: ${(p) => p.$gap ?? 0}px;
  background: #d2d8de;
`;

const BigButton = styled.div<{ $width: number }>`
  width: ${(p) => p.$width}px;
  display: flex;
  flex-direction: column;
  align-items: center;
  line-height: 11.5px;
`;

const BigIcon = styled.div`
  height: 37px;
  display: flex;
  align-items: flex-start;
  padding-top: 4px;
`;

const BigLine = styled.div`
  height: 12px;
  display: flex;
  align-items: center;
  gap: 3px;
`;

const FxBig = styled.span`
  font-family: 'Liberation Serif', serif;
  font-style: italic;
  font-size: 29px;
  line-height: 25px;
  letter-spacing: 0;
  color: #111;
  -webkit-text-stroke: 0.5px #111;

  small {
    font-size: 26px;
  }
`;

const Sigma = styled.span`
  padding-left: 2px;
  font-family: 'Liberation Serif', serif;
  font-weight: bold;
  font-size: 28px;
  line-height: 29px;
  letter-spacing: 0;
  color: #222;
`;

const SmallColumn = styled.div<{ $spread?: boolean; $left?: number; $width?: number }>`
  display: flex;
  flex-direction: column;
  padding-top: ${(p) => (p.$spread ? 9 : 2)}px;
  gap: ${(p) => (p.$spread ? 6 : 0)}px;
  margin-left: ${(p) => p.$left ?? 0}px;
  ${(p) => p.$width && `width: ${p.$width}px;`}
`;

const SmallButton = styled.div<{ $disabled?: boolean }>`
  height: 19.8px;
  display: flex;
  align-items: center;
  gap: 2px;
  color: ${(p) => (p.$disabled ? '#9a9fa5' : '#2b2f34')};

  svg + span + svg {
    margin-left: 2px;
  }
`;

const FormulaBar = styled.div`
  height: 24px;
  flex: none;
  display: flex;
  padding: 2px 1px 4px 0;
  border-bottom: 1px solid #8f969e;
  background: #e3e8ec;
  ${sheetFont}
`;

const NameBox = styled.div`
  width: 161px;
  display: flex;
  align-items: center;
  justify-content: space-between;
  padding: 0 6px 0 66px;
  background: #fff;
  border-top: 1px solid #a9b0b8;
  border-bottom: 1px solid #a9b0b8;
  font-size: 12.6px;
`;

const FxArea = styled.div`
  width: 72px;
  display: flex;
  align-items: center;
  justify-content: space-between;
  padding: 0 4px 0 5px;
  border: 1px solid #a9b0b8;
  border-radius: 9px 0 0 9px;
  background: #dfe4e9;
`;

const FxKnob = styled.div`
  width: 7px;
  height: 7px;
  border-radius: 50%;
  background: linear-gradient(#b0b6bd, #f0f2f4);
`;

const FxSmall = styled.span`
  font-family: 'Liberation Serif', serif;
  font-style: italic;
  font-weight: bold;
  font-size: 13px;
  line-height: 14px;

  small {
    font-size: 11px;
  }
`;

const FormulaInput = styled.div`
  flex: 1;
  display: flex;
  align-items: center;
  padding-left: 8px;
  background: #fff;
  border-top: 1px solid #a9b0b8;
  border-bottom: 1px solid #a9b0b8;
  font-size: 12.6px;
`;

const ExpandButton = styled.div`
  width: 13px;
  display: flex;
  align-items: center;
  justify-content: center;
  border: 1px solid #9fa7af;
`;

const Workspace = styled.div`
  height: 504px;
  flex: none;
  display: flex;
`;

const SheetArea = styled.div`
  width: 1134px;
  overflow: hidden;
  background: #fff;
  ${sheetFont}
`;

const columnTemplate = `23.4px ${COLUMNS.map((c) => `${c.width}px`).join(' ')}`;

const OutlineGrid = styled.div`
  height: 31px;
  display: grid;
  grid-template-columns: ${columnTemplate};
  grid-template-rows: 15px 16px;
  background: #dce3ee;
`;

const OutlineLevels = styled.div`
  grid-row: 1 / 3;
  display: flex;
  flex-direction: column;
  align-items: center;
  padding-top: 2px;
  border-right: 1px solid #9fa8b4;
`;

const OutlineButton = styled.div<{ $minus?: boolean }>`
  width: 13px;
  height: 13px;
  flex: none;
  line-height: 11px;
  text-align: center;
  font-size: 8px;
  font-weight: bold;
  color: #111;
  border: 1px solid #74819b;
  background: #e9eef7;
  ${(p) =>
    p.$minus &&
    css`
      display: flex;
      align-items: center;
      justify-content: center;

      &::before {
        content: '';
        width: 6px;
        height: 2px;
        background: #000;
      }
    `}
`;

const OutlineBar = styled.div`
  grid-column: 10 / 14;
  display: flex;
  padding: 2px 0 0 2px;
`;

const Bracket = styled.div`
  width: 258px;
  height: 5px;
  margin-top: 3px;
  border-top: 2px solid #000;
  border-left: 2px solid #000;
`;

const OutlineDot = styled.div<{ $column: number }>`
  grid-row: 2;
  grid-column: ${(p) => p.$column};
  width: 2px;
  height: 2px;
  margin-top: 3px;
  justify-self: center;
  background: #222;
`;

const Cells = styled.div`
  display: grid;
  grid-template-columns: ${columnTemplate};
  grid-template-rows: 15px 16.4px 16.2px 35.4px;
  grid-auto-rows: 15.29px;
`;

const Corner = styled.div`
  display: flex;
  align-items: flex-end;
  justify-content: flex-end;
  padding: 0 3px 2px 0;
  background: #dfe4e8;
  border-top: 1px solid #9fa8b0;
  border-right: 1px solid #c9b98a;
  border-bottom: 1px solid #c9b98a;
`;

const ColumnHeader = styled.div<{ $selected?: boolean }>`
  padding-left: 1px;
  line-height: 15px;
  text-align: center;
  color: #2c3238;
  border-top: 1px solid ${(p) => (p.$selected ? '#b98f3c' : '#9fa8b0')};
  border-right: 1px solid ${(p) => (p.$selected ? '#c2983f' : '#a5adb5')};
  border-bottom: 1px solid ${(p) => (p.$selected ? '#c2983f' : '#a5adb5')};
  background: ${(p) => (p.$selected ? 'linear-gradient(#fbdf7c, #fcd55c)' : '#dde2e6')};
`;

const RowHeader = styled.div<{ $selected?: boolean; $bottom?: boolean }>`
  grid-column: 1;
  padding-top: ${(p) => (p.$bottom ? 19 : 0)}px;
  text-align: center;
  line-height: 16px;
  color: #33383d;
  border-right: 1px solid ${(p) => (p.$selected ? '#b98f3c' : '#a5adb5')};
  border-bottom: 1px solid ${(p) => (p.$selected ? '#d0a548' : '#b4bbc2')};
  background: ${(p) => (p.$selected ? '#fcd964' : '#dfe4e8')};
`;

const Cell = styled.div`
  border-right: 1px solid #dadcdd;
  border-bottom: 1px solid #dadcdd;
`;

const EntryCell = styled.div<{ $center?: boolean; $last?: boolean }>`
  padding-left: ${(p) => (p.$center ? 1 : 2)}px;
  line-height: 16px;
  letter-spacing: -0.3px;
  color: #000;
  text-align: ${(p) => (p.$center ? 'center' : 'left')};
  border-right: ${(p) => (p.$last ? 2 : 1)}px solid #000;
  border-bottom: 1px dotted #222;
`;

const TitleCell = styled.div`
  grid-row: 2 / 4;
  grid-column: 2 / 8;
  line-height: 34px;
  text-align: center;
  font-size: 18.6px;
  font-weight: bold;
  letter-spacing: -0.2px;
  color: #fff;
  background: #7030a0;
  border-bottom: 1px solid #000;
`;

const StandardTitle = styled.div`
  grid-column: 10 / 13;
  margin: -1px 0 0 -1px;
  line-height: 15px;
  text-align: center;
  font-weight: bold;
  letter-spacing: -0.55px;
  color: #fff;
  background: #7030a0;
  border: 2px solid #000;
  border-bottom-width: 1px;
`;

const HeadCell = styled.div<{ $last?: boolean; $standard?: boolean }>`
  display: flex;
  align-items: center;
  justify-content: center;
  padding: 1px 1px 0;
  text-align: center;
  white-space: normal;
  line-height: 15px;
  font-weight: bold;
  letter-spacing: 0;
  color: #e6fbff;
  background: #00b0f0;
  border-top: 1px solid #000;
  border-right: ${(p) => (p.$last ? 2 : 1)}px solid #000;
  border-bottom: 2px solid #000;
  ${(p) =>
    p.$standard &&
    css`
      letter-spacing: -0.1px;
      border-bottom: 2px solid #fff;
      box-shadow: 0 -1px 0 #000 inset;
    `}
`;

const DrugCell = styled.div<{ $first?: boolean; $active?: boolean; $last?: boolean }>`
  padding-left: 2px;
  line-height: 16px;
  overflow: hidden;
  color: #0b1420;
  background: ${(p) => (p.$active ? '#fff' : '#b5d8fd')};
  border-right: 1px solid #1d2c3e;
  border-bottom: 1px dotted #1d2c3e;
  ${(p) =>
    p.$first &&
    css`
      border-top: 1px solid #000;
      line-height: 14px;
    `}
  ${(p) => p.$last && 'box-shadow: inset -2px 0 #fff;'}
`;

const VScroll = styled.div`
  width: 15px;
  display: flex;
  flex-direction: column;
  align-items: center;
  border-left: 1px solid #9aa2ab;
  border-right: 1px solid #7d858e;
  background: #dde2e7;
`;

const SplitBox = styled.div`
  width: 13px;
  height: 8px;
  border: 2px solid #9299a1;
  background: #fff;
`;

const bars = css`
  background: #8d959d;
`;

const VThumb = styled.div`
  width: 13px;
  height: 187px;
  display: flex;
  flex-direction: column;
  align-items: center;
  justify-content: center;
  gap: 2px;
  border: 1px solid #9aa2ab;
  background: linear-gradient(90deg, #f7f9fa, #cfd6dc);

  i {
    width: 7px;
    height: 1px;
    ${bars}
  }
`;

const RightEdge = styled.div`
  flex: 1;
  background: #e6eaee;
`;

const TabStrip = styled.div`
  height: 14px;
  flex: none;
  display: flex;
  background: #dfe4e9;
  border-top: 1px solid #a9b1b9;
`;

const SheetTab = styled.div<{ $active?: boolean }>`
  width: ${(p) => (p.$active ? 54 : 67)}px;
  line-height: 13px;
  text-align: center;
  font-size: 11px;
  color: #454c54;
  border-left: 1px solid #9aa4af;
  border-bottom: 1px solid #9aa4af;
  ${(p) =>
    p.$active &&
    css`
      background: #fff;
      font-weight: bold;
      font-size: 11.3px;
      letter-spacing: -0.1px;
      border-color: #fff;
    `}
`;

const SplitHandle = styled.div`
  width: 7px;
  border: 1px solid #858d96;
  background: linear-gradient(90deg, #fff 2px, #999 2px, #999 3px, #fff 3px);
`;

const HThumb = styled.div`
  width: 384px;
  display: flex;
  align-items: center;
  justify-content: center;
  gap: 2px;
  border: 1px solid #9aa2ab;
  background: linear-gradient(#f7f9fa, #d3d9df);

  i {
    width: 1px;
    height: 6px;
    ${bars}
  }
`;

const HTrack = styled.div`
  width: 40px;
  display: flex;
  justify-content: flex-end;
  background: #d5dbe1;
`;

const StripEnd = styled.div`
  width: 18px;
`;

const Status = styled.div`
  height: 20px;
  flex: none;
  display: flex;
  align-items: center;
  border-top: 1px solid #aab1b8;
  border-bottom: 1px solid #50565c;
  background: linear-gradient(#e6e9ec, #cdd1d5 50%, #b9bdc2);
`;

const StatusText = styled.div<{ $width: number }>`
  width: ${(p) => p.$width}px;
  text-align: center;
`;

const StatusLine = styled.div`
  width: 1px;
  height: 15px;
  background: #8f959b;
`;

const MacroIcon = styled.svg`
  margin: 0 9px 0 8px;
`;

const ViewIcons = styled.svg`
  margin: 0 2px 0 3px;
`;

const Task = styled.div`
  height: 36px;
  flex: none;
  display: flex;
  align-items: center;
  color: #fff;
  border-top: 1px solid #4d7ba5;
  background: linear-gradient(
      70deg,
      transparent 700px,
      rgba(120, 170, 215, 0.16) 730px,
      rgba(120, 170, 215, 0.05) 790px,
      rgba(5, 20, 45, 0.3) 900px
    ),
    linear-gradient(#1b4a7d, #153e6d);
`;

const TaskItem = styled.div<{ $width: number; $open?: boolean; $focused?: boolean }>`
  width: ${(p) => p.$width}px;
  height: 35px;
  display: flex;
  align-items: center;
  justify-content: center;
  ${(p) =>
    p.$open &&
    css`
      height: 34px;
      margin-right: 4px;
      border: 1px solid #b7c9db;
      border-radius: 2px;
      background: ${p.$focused
        ? 'linear-gradient(120deg, #e3ebf2, #a9bccf 55%, #90a9c1)'
        : 'linear-gradient(120deg, #7f9cb9, #35608e 50%, #527aa3)'};
    `}
`;

const Desktop = styled.div`
  margin-right: 6px;
  padding-bottom: 2px;
  font-size: 10.6px;
`;

const Chevrons = styled.div`
  margin-right: 10px;
  padding-bottom: 22px;
  font-size: 13px;
  line-height: 10px;
`;

const Language = styled.div`
  margin-right: 14px;
  padding-bottom: 5px;
`;

const Clock = styled.div`
  width: 76px;
  display: flex;
  flex-direction: column;
  align-items: center;
  font-size: 10.6px;
  letter-spacing: -0.25px;
  line-height: 15px;
`;

const ShowDesktop = styled.div`
  width: 12px;
  height: 34px;
  margin-right: 1px;
  border: 1px solid #7f9ab5;
  background: linear-gradient(135deg, #5e7f9f, #1d3f66);
`;

const ClickSpot = styled.div`
  position: absolute;
  left: 767px;
  top: 556px;
  width: 52px;
  height: 52px;
  border-radius: 50%;
  clip-path: inset(0 2px 0 0);
  background: #b5d600;
  mix-blend-mode: darken;
`;

const Pointer = styled.div`
  position: absolute;
  left: 785px;
  top: 574px;
  z-index: 2;
`;
